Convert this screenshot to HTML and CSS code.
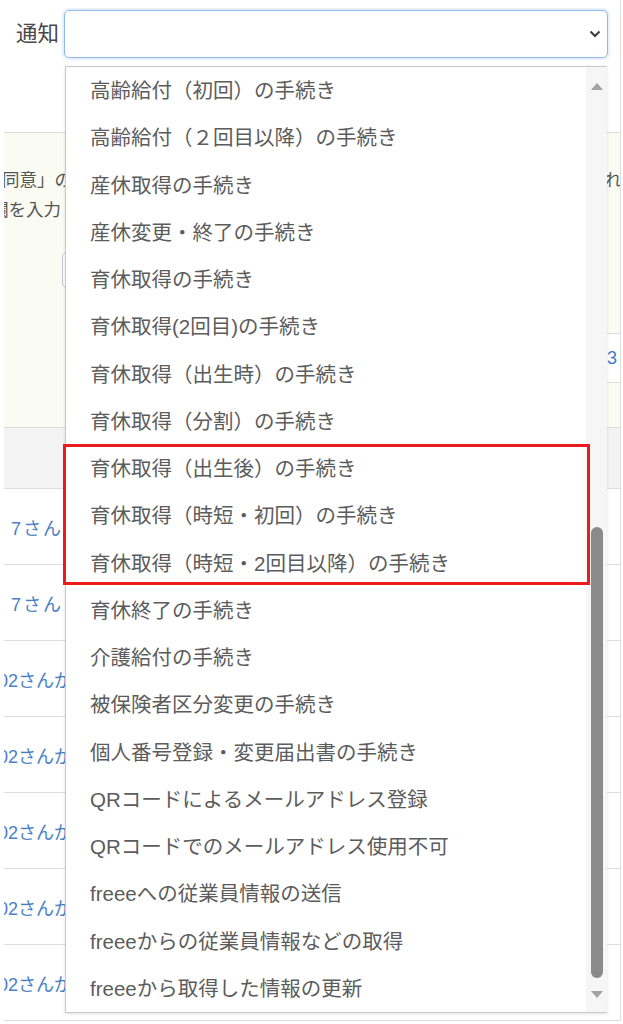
FILE: index.html
```html
<!DOCTYPE html>
<html>
<head>
	<meta charset="utf-8">
	<meta name="viewport" content="width=device-width, initial-scale=1">
	<title>通知の選択</title>
	<link rel="stylesheet" href="styles.css">
</head>
<body>

	<div class="page">
		<div class="form-row">
			<label class="field-label">通知</label>
			<div class="select-box">
				<svg class="chevron" width="12" height="8" viewBox="0 0 12 8"><path d="M1.5 1.5l4.5 4.5 4.5-4.5" fill="none" stroke="#343a40" stroke-width="2"/></svg>
			</div>
		</div>

		<div class="panel">
			<p class="panel-line">
				<span class="lead-a">同意」の</span>
				<span class="tail">れ</span>
			</p>
			<p class="panel-line"><span class="lead-b">欄を入力</span></p>
			<button class="ghost-btn"></button>
			<div class="panel-table"><span>3</span></div>
		</div>

		<div class="list-head"></div>
		<div class="list-row"><span class="name short">7さん</span></div>
		<div class="list-row"><span class="name short">7さん</span></div>
		<div class="list-row"><span class="name">02さんが</span></div>
		<div class="list-row"><span class="name">02さんが</span></div>
		<div class="list-row"><span class="name">02さんが</span></div>
		<div class="list-row"><span class="name">02さんが</span></div>
		<div class="list-row"><span class="name">02さんが</span></div>
	</div>

	<!-- open options of the select, drawn over the page -->
	<div class="dropdown">
		<ul class="options">
			<li>高齢給付（初回）の手続き</li>
			<li>高齢給付（２回目以降）の手続き</li>
			<li>産休取得の手続き</li>
			<li>産休変更・終了の手続き</li>
			<li>育休取得の手続き</li>
			<li>育休取得(2回目)の手続き</li>
			<li>育休取得（出生時）の手続き</li>
			<li>育休取得（分割）の手続き</li>
			<li class="marked">
				<ul>
					<li>育休取得（出生後）の手続き</li>
					<li>育休取得（時短・初回）の手続き</li>
					<li>育休取得（時短・2回目以降）の手続き</li>
				</ul>
			</li>
			<li>育休終了の手続き</li>
			<li>介護給付の手続き</li>
			<li>被保険者区分変更の手続き</li>
			<li>個人番号登録・変更届出書の手続き</li>
			<li>QRコードによるメールアドレス登録</li>
			<li>QRコードでのメールアドレス使用不可</li>
			<li>freeeへの従業員情報の送信</li>
			<li>freeeからの従業員情報などの取得</li>
			<li>freeeから取得した情報の更新</li>
		</ul>
		<div class="scrollbar">
			<div class="arrow up"></div>
			<div class="thumb"></div>
			<div class="arrow down"></div>
		</div>
	</div>

</body>
</html>
```

FILE: styles.css
```css
*{
    margin:0;
    padding:0;
    box-sizing: border-box;
}
body{
    background: #fff;
    font-family: "Liberation Sans", "Noto Sans CJK JP", sans-serif;
    color: #555;
}
.page{
    margin-left: 4px;
    width: 617px;
    border-right: 1px solid #dedede;
    overflow: hidden;
}
.form-row{
    height: 132px;
    display: flex;
    align-items: flex-start;
    padding: 10px 12px 0 12px;
}
.field-label{
    width: 48px;
    height: 48px;
    line-height: 48px;
    font-size: 21.5px;
    color: #484848;
}
.select-box{
    flex: 1;
    height: 48px;
    border: 1px solid #8fb9ee;
    border-radius: 5px;
    box-shadow: 0 0 0 2px rgba(120, 170, 235, 0.18);
    display: flex;
    justify-content: flex-end;
    align-items: center;
    padding-right: 6px;
}
.panel{
    height: 295px;
    border-top: 1px solid #dcdcdc;
    background: #fafcf3;
    padding-top: 32px;
}
.panel-line{
    height: 30px;
    line-height: 30px;
    font-size: 17.5px;
    display: flex;
    justify-content: space-between;
    white-space: nowrap;
    overflow: hidden;
}
.lead-a{
    margin-left: -2px;
}
.lead-b{
    margin-left: -13px;
}
.tail{
    margin-right: -2px;
}
.ghost-btn{
    display: block;
    margin: 27px 0 0 58px;
    width: 120px;
    height: 36px;
    border: 1px solid #c4c4c4;
    border-radius: 5px;
    background: #fff;
}
.panel-table{
    margin: 45px 0 0 70px;
    height: 50px;
    background: #fff;
    border-top: 1px solid #dcdcdc;
    border-bottom: 1px solid #dcdcdc;
    display: flex;
    justify-content: flex-end;
    align-items: center;
    padding-right: 3px;
    font-size: 18px;
    color: #3d7cc9;
}
.list-head{
    height: 62px;
    background: #f3f3f3;
    border-top: 1px solid #dcdcdc;
    border-bottom: 1px solid #dcdcdc;
}
.list-row{
    height: 76px;
    border-bottom: 1px solid #dcdcdc;
    display: flex;
    align-items: center;
    font-size: 18px;
    color: #4a7fc4;
    white-space: nowrap;
}
.name{
    margin-left: -6px;
}
.name.short{
    margin-left: 7px;
    letter-spacing: 2px;
}

/* the opened list */
.dropdown{
    position: absolute;
    left: 65px;
    top: 66px;
    width: 542px;
    height: 947px;
    background: #fff;
    border: 1px solid #c9c9c9;
    border-right: none;
    box-shadow: 0 1px 3px rgba(0, 0, 0, 0.12);
    display: flex;
}
.options{
    flex: 1;
    list-style: none;
    color: #5c5c5c;
}
.options li{
    height: 47.25px;
    line-height: 47.25px;
    padding-left: 24px;
    font-size: 20.5px;
    white-space: nowrap;
}
.options .marked{
    height: auto;
    padding-left: 0;
    position: relative;
}
.options .marked ul{
    list-style: none;
}
.options .marked::after{
    content: "";
    position: absolute;
    top: -1px;
    bottom: 2px;
    left: -3px;
    right: -4px;
    border: 3px solid #ec1c1c;
}
.scrollbar{
    width: 21px;
    background: #f6f6f6;
    display: flex;
    flex-direction: column;
    align-items: center;
}
.arrow{
    width: 0;
    height: 0;
    border-left: 6px solid transparent;
    border-right: 6px solid transparent;
}
.arrow.up{
    margin-top: 16px;
    border-bottom: 7px solid #a3a3a3;
}
.thumb{
    margin-top: 437px;
    width: 12px;
    height: 451px;
    border-radius: 6px;
    background: #8a8a8a;
}
.arrow.down{
    margin-top: 13px;
    border-top: 7px solid #a3a3a3;
}
```
